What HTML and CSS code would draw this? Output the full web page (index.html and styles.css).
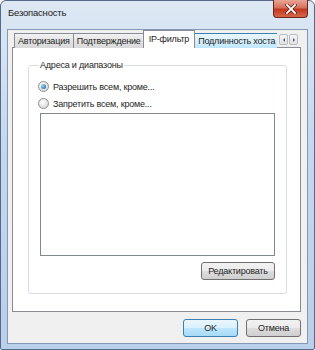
FILE: index.html
```html
<!DOCTYPE html>
<html lang="ru">
<head>
    <meta charset="UTF-8">
    <title>Безопасность</title>
    <link rel="stylesheet" href="styles.css">
</head>
<body>
    <div class="window">
        <div class="titlebar">
            <span class="title">Безопасность</span>
            <div class="close">
                <svg width="12" height="10" viewBox="0 0 12 10">
                    <path d="M2 1 L10 9 M10 1 L2 9" stroke="#5a1a10" stroke-width="3.2" stroke-linecap="square"/>
                    <path d="M2 1 L10 9 M10 1 L2 9" stroke="#ffffff" stroke-width="1.8" stroke-linecap="square"/>
                </svg>
            </div>
        </div>

        <div class="client">
            <div class="tabstrip">
                <div class="tabs">
                    <div class="tab">Авторизация</div>
                    <div class="tab">Подтверждение</div>
                    <div class="tab active">IP-фильтр</div>
                    <div class="tab hot">Подлинность хоста</div>
                </div>
                <div class="scroller">
                    <span class="arrow left"></span>
                    <span class="arrow right"></span>
                </div>
            </div>

            <div class="panel">
                <fieldset class="group">
                    <legend>Адреса и диапазоны</legend>
                    <div class="radio checked"><span class="dot"></span>Разрешить всем, кроме...</div>
                    <div class="radio"><span class="dot"></span>Запретить всем, кроме...</div>
                    <div class="listbox"></div>
                    <div class="group-actions">
                        <button class="btn edit">Редактировать</button>
                    </div>
                </fieldset>
            </div>

            <div class="footer">
                <button class="btn default">OK</button>
                <button class="btn">Отмена</button>
            </div>
        </div>
    </div>
</body>
</html>
```

FILE: styles.css
```css
body {
    margin: 0;
    font-family: "Liberation Sans", Arial, sans-serif;
    font-size: 9px;
    letter-spacing: -0.2px;
    color: #1e1e1e;
}

.window {
    width: 315px;
    height: 350px;
    box-sizing: border-box;
    border: 1px solid #56698a;
    border-radius: 6px 6px 2px 2px;
    background: linear-gradient(#dde8f4, #c6d8ef 40%, #b9cfea);
    padding: 0 6px 5px 6px;
    display: flex;
    flex-direction: column;
}

.titlebar {
    height: 28px;
    display: flex;
    justify-content: space-between;
    align-items: flex-start;
}

.title {
    margin-top: 6px;
    margin-left: 1px;
    font-size: 9.5px;
    color: #1b1b1b;
}

.close {
    width: 35px;
    height: 18px;
    margin-top: -1px;
    box-sizing: border-box;
    border: 1px solid #6b2416;
    border-top: none;
    border-radius: 0 0 4px 4px;
    background: linear-gradient(#e8a696, #d6705c 45%, #c2371f 55%, #d46a4c);
    display: flex;
    justify-content: center;
    align-items: center;
}

.client {
    flex: 1;
    background: #f0f0f0;
    border: 1px solid #8497b4;
    display: flex;
    flex-direction: column;
    padding: 0 6px 0 4px;
}

.tabstrip {
    display: flex;
    align-items: flex-end;
    height: 17px;
    margin-top: 1px;
    position: relative;
    z-index: 1;
}

.tabs {
    display: flex;
    align-items: flex-end;
    padding-left: 2px;
    width: 263px;
    overflow: hidden;
    flex: none;
}

.tab {
    flex: none;
    height: 14px;
    padding: 0 3px;
    line-height: 14px;
    border: 1px solid #898c95;
    border-bottom: none;
    border-left: none;
    background: linear-gradient(#f2f2f2, #e3e3e3 50%, #d9d9d9);
    white-space: nowrap;
}

.tab:first-child {
    border-left: 1px solid #898c95;
}

.tab.active {
    height: 17px;
    margin: 0 -2px 0 -2px;
    padding: 0 5px;
    line-height: 16px;
    background: #ffffff;
    border-left: 1px solid #898c95;
    position: relative;
    z-index: 1;
}

.tab.hot {
    background: linear-gradient(#eaf6fd, #d9f0fc 50%, #bee6fd);
    border-color: #3c7fb1;
    border-left: none;
    padding-left: 5px;
    padding-right: 10px;
}

.scroller {
    display: flex;
    gap: 1px;
    margin-left: 2px;
    margin-bottom: 3px;
}

.arrow {
    width: 9px;
    height: 11px;
    box-sizing: border-box;
    border: 1px solid #b7bcc4;
    border-radius: 2px;
    background: linear-gradient(#f6f6f6, #e2e2e2);
    display: flex;
    justify-content: center;
    align-items: center;
}

.arrow::after {
    content: "";
    border-top: 2px solid transparent;
    border-bottom: 2px solid transparent;
}

.arrow.left::after {
    border-right: 2px solid #4a5a78;
}

.arrow.right::after {
    border-left: 2px solid #4a5a78;
}

.panel {
    height: 265px;
    box-sizing: border-box;
    background: #ffffff;
    border: 1px solid #898c95;
    margin-top: -1px;
    padding: 11px 13px 17px 15px;
    display: flex;
}

.group {
    flex: 1;
    margin: 0;
    padding: 6px 11px 0 11px;
    border: 1px solid #d5dfe5;
    border-radius: 3px;
    display: flex;
    flex-direction: column;
}

.group legend {
    padding: 0 1px;
    margin-left: -1px;
    line-height: 13px;
}

.radio {
    height: 17px;
    display: flex;
    align-items: center;
    gap: 4px;
    margin-left: -2px;
}

.radio .dot {
    width: 9px;
    height: 9px;
    border-radius: 50%;
    border: 1px solid #8e8f8f;
    background: radial-gradient(circle at 40% 35%, #ffffff, #d8d8d8 80%);
    display: flex;
    justify-content: center;
    align-items: center;
}

.radio.checked .dot::after {
    content: "";
    width: 5px;
    height: 5px;
    border-radius: 50%;
    background: radial-gradient(circle at 35% 35%, #9fdcf7, #1a6fa8 80%);
}

.listbox {
    height: 143px;
    box-sizing: border-box;
    margin-top: 1px;
    border: 1px solid #828790;
    background: #ffffff;
}

.group-actions {
    display: flex;
    justify-content: flex-end;
    margin-top: 6px;
}

.btn {
    font-family: inherit;
    font-size: 9px;
    letter-spacing: -0.2px;
    color: #1e1e1e;
    height: 18px;
    padding: 0;
    border: 1px solid #707070;
    border-radius: 3px;
    background: linear-gradient(#f2f2f2, #ebebeb 50%, #dddddd 51%, #cfcfcf);
}

.btn.edit {
    width: 74px;
    height: 18px;
}

.footer {
    display: flex;
    justify-content: flex-end;
    gap: 8px;
    margin-top: 7px;
}

.footer .btn {
    width: 55px;
}

.btn.default {
    border-color: #3c7fb1;
    background: linear-gradient(#eaf6fd, #d9f0fc 50%, #bee6fd 51%, #a7d9f5);
}
```
